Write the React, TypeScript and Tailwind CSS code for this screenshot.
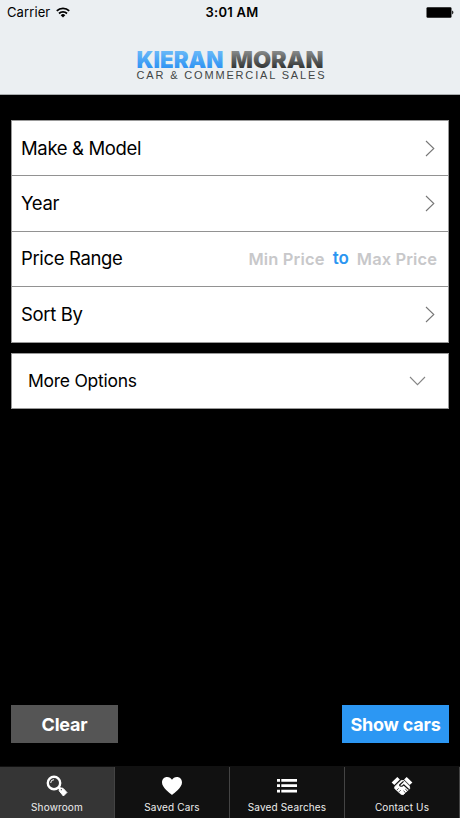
import React from "react";

function Chevron({ down = false }: { down?: boolean }) {
  return down ? (
    <svg width="17" height="10" viewBox="0 0 17 10" fill="none" stroke="#858585" strokeWidth="1.1">
      <path d="M1 1l7.500 7.600L16 1" />
    </svg>
  ) : (
    <svg width="10" height="17" viewBox="0 0 10 17" fill="none" stroke="#777" strokeWidth="1.1">
      <path d="M1 1l7.800 7.500L1 16" />
    </svg>
  );
}

function Logo() {
  return (
    <svg width="190" height="32" viewBox="0 0 190 32" className="block overflow-visible">
      <defs>
        <linearGradient id="blue" x1="0" y1="0" x2="0" y2="1">
          <stop offset="0.2" stopColor="#66b7f8" />
          <stop offset="0.8" stopColor="#2e93f3" />
        </linearGradient>
        <linearGradient id="grey" x1="0" y1="0" x2="0" y2="1">
          <stop offset="0.2" stopColor="#858888" />
          <stop offset="0.8" stopColor="#303333" />
        </linearGradient>
      </defs>
      <g fontFamily="Inter, sans-serif" fontWeight="900" fontSize="23">
        <text x="1.500" y="18" textLength="87" lengthAdjust="spacingAndGlyphs" fill="url(#blue)">KIERAN</text>
        <text x="95.500" y="18" textLength="93" lengthAdjust="spacingAndGlyphs" fill="url(#grey)">MORAN</text>
      </g>
      <text x="1.500" y="29" fontFamily="'Liberation Sans', sans-serif" fontSize="11" textLength="188" fill="#414545">CAR &amp; COMMERCIAL SALES</text>
    </svg>
  );
}

function StatusBar() {
  return (
    <div className="grid h-6 grid-cols-3 items-center text-[13px] leading-6 text-black">
      <div className="flex items-center gap-[6px] pl-[7px]">
        <span className="tracking-[0.1px]">Carrier</span>
        <svg width="14" height="11" viewBox="0 0 14 11" fill="none" stroke="#000" strokeWidth="1.800">
          <path d="M.8 3.900a8.800 8.800 0 0 1 12.400 0" />
          <path d="M3 6.500a5.700 5.700 0 0 1 8 0" />
          <path d="M7 10.500L4.700 8.200a3.300 3.300 0 0 1 4.600 0Z" fill="#000" stroke="none" />
        </svg>
      </div>
      <span className="pl-[4px] text-center font-semibold tracking-[0.250px]">3:01 AM</span>
      <div className="flex justify-end pr-[6px]">
        <svg width="28" height="11" viewBox="0 0 28 11">
          <rect x=".5" y=".2" width="25" height="10.600" rx="1.200" />
          <path d="M26.200 3.600c1.600.5 1.600 3.300 0 3.800Z" />
        </svg>
      </div>
    </div>
  );
}

function Row({ label, children, raised = false }: { label: string; children: React.ReactNode; raised?: boolean }) {
  return (
    <div className={`flex items-center justify-between pl-[9px] ${raised ? "pr-[11px] pb-[2px]" : "pr-[13px]"}`}>
      <span className="pt-px text-[18.500px] tracking-[-0.350px]">{label}</span>
      {children}
    </div>
  );
}

function SearchIcon() {
  return (
    <svg width="22" height="22" viewBox="0 0 22 22" fill="none" stroke="#fff">
      <circle cx="8" cy="8" r="6.200" strokeWidth="2.400" />
      <path d="M4.700 8A3.300 3.300 0 0 1 8 4.700" strokeWidth="1" />
      <path d="M12.200 12.200l3 3" strokeWidth="2.400" />
      <path d="M13.200 15.800l.5-3 3.300.5 3.900 4.200-3.500 3.500Z" fill="#fff" strokeWidth="1" strokeLinejoin="round" />
      <circle cx="15.300" cy="14.700" r=".6" fill="#333" stroke="none" />
    </svg>
  );
}

function HeartIcon() {
  return (
    <svg width="22" height="22" viewBox="0 0 22 22" fill="#fff">
      <path d="M11 20C8.800 17.700 1 12.600 1 7.400 1 4.200 3.200 2 6.100 2 8.300 2 10.100 3.100 11 4.800 11.900 3.100 13.700 2 15.900 2 18.800 2 21 4.200 21 7.400 21 12.600 13.200 17.700 11 20Z" />
    </svg>
  );
}

function ListIcon() {
  return (
    <svg width="22" height="22" viewBox="0 0 22 22" fill="#fff">
      <path d="M1 4h3v2.700H1zM5.300 4H21v2.700H5.300zM1 9.300h3V12H1zM5.300 9.300H21V12H5.300zM1 14.700h3v2.700H1zM5.300 14.700H21v2.700H5.300z" />
    </svg>
  );
}

function HandshakeIcon() {
  return (
    <svg width="22" height="22" viewBox="0 0 22 22" fill="none" strokeLinecap="round" strokeLinejoin="round">
      <path d="M6.300 2l2.600 2.600-5.600 5.500L.6 7.500ZM15.700 2l-2.600 2.600 5.600 5.500 2.700-2.600Z" fill="#fff" />
      <path d="M4.200 11.200l6-5.700h2.600l5.500 5.500.5 2.500-6.600 6.200-2.200-.5-6.300-5.700Z" fill="#fff" stroke="#fff" strokeWidth=".8" />
      <path d="M12.200 6.600L8.600 10c.6 1.900 2.600 1.500 4-.2l4.900 4.400" stroke="#111" strokeWidth="1.200" />
      <path d="M14.300 17.500l-1.500-1.400M16.100 15.800l-1.500-1.400" stroke="#111" strokeWidth=".8" />
      <path d="M6.200 14.800l1.200-1.200M8.300 16.600l1.200-1.200" stroke="#111" strokeWidth=".7" />
    </svg>
  );
}

const tabs = [
  { label: "Showroom", icon: <SearchIcon /> },
  { label: "Saved Cars", icon: <HeartIcon /> },
  { label: "Saved Searches", icon: <ListIcon /> },
  { label: "Contact Us", icon: <HandshakeIcon /> },
];

export default function App() {
  return (
    <div className="flex h-[818px] w-[460px] flex-col overflow-hidden bg-black font-['Inter',sans-serif] text-black">
      <header className="h-[95px] shrink-0 border-b border-[#a9adaf] bg-[#ebeff2]">
        <StatusBar />
        <div className="flex justify-center pt-[26px]"><Logo /></div>
      </header>
      <main className="flex flex-1 flex-col px-[11px] pt-[25px]">
        <section className="grid h-[223px] grid-rows-[55px_56px_55px_55px] divide-y divide-[#929292] border border-[#999] bg-white">
          <Row label="Make & Model"><Chevron /></Row>
          <Row label="Year"><Chevron /></Row>
          <Row label="Price Range" raised>
            <div className="flex items-center gap-[8px] text-[16.500px] font-semibold whitespace-nowrap text-[#c8c8ca]">
              <span className="pt-[2px] tracking-[0.150px]">Min Price</span>
              <span className="pt-px text-[17px] text-[#2b96f1]">to</span>
              <span className="pt-[2px] tracking-[0.100px]">Max Price</span>
            </div>
          </Row>
          <Row label="Sort By"><Chevron /></Row>
        </section>
        <section className="mt-[10px] flex h-[56px] items-center justify-between border border-[#999] bg-white pr-[22px] pl-[16px]">
          <span className="pt-px text-[17.500px] tracking-[-0.250px]">More Options</span>
          <Chevron down />
        </section>
        <div className="mt-auto mb-[23px] flex justify-between text-[18px] font-bold tracking-[-0.200px] text-white">
          <button className="h-[38px] w-[107px] bg-[#555]">Clear</button>
          <button className="h-[38px] w-[107px] bg-[#2c97f3] whitespace-nowrap">Show cars</button>
        </div>
      </main>
      <nav className="grid h-[52px] shrink-0 grid-cols-4 border-t border-[#111] bg-[#111]">
        {tabs.map((tab, i) => (
          <button key={tab.label} className={`flex flex-col items-center border-r border-[#444] pt-[8px] text-[10px] leading-[14px] text-[#eee] ${i === 0 ? "bg-[#353535]" : ""}`}>
            {tab.icon}
            <span className="mt-[3px] tracking-[0.150px]">{tab.label}</span>
          </button>
        ))}
      </nav>
    </div>
  );
}
